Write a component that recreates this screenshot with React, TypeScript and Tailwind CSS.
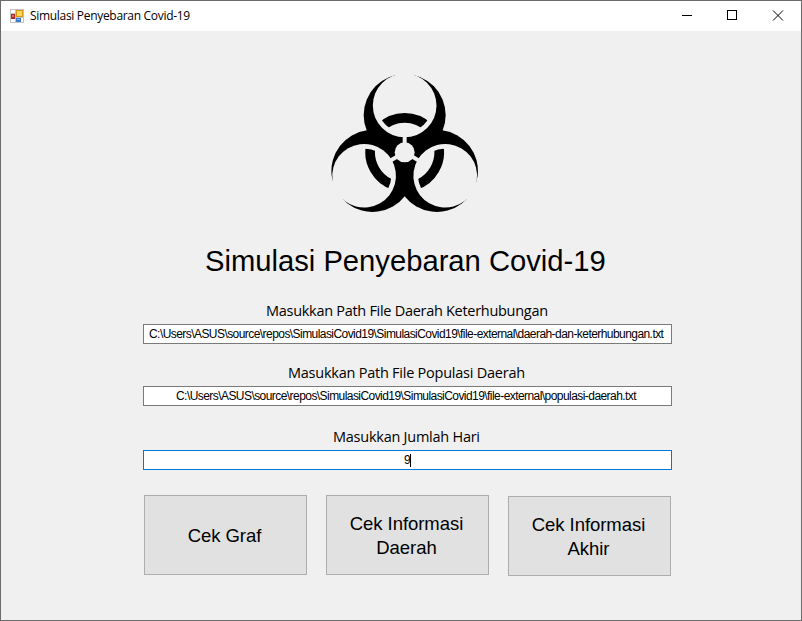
import React from 'react';

const ui = "font-['Open_Sans','Noto_Sans',sans-serif]";
const sans = "font-['Liberation_Sans',Arial,sans-serif]";

function FormIcon() {
  return (
    <svg width="14" height="14" viewBox="0 0 14 14" shapeRendering="crispEdges" className="shrink-0">
      <rect width="14" height="14" fill="#c3c3c3" />
      <rect x="1" y="1" width="4" height="3" fill="#fff" />
      <rect x="1" y="10" width="4" height="3" fill="#fff" />
      <rect x="6" y="9" width="7" height="4" fill="#fff" />
      <rect x="1" y="5" width="4" height="5" fill="#b3261e" />
      <rect x="2" y="6" width="2" height="2" fill="#e0716a" />
      <rect x="6" y="1" width="7" height="7" fill="#d39a12" />
      <rect x="7" y="2" width="5" height="5" fill="#ffd45c" />
      <rect x="6" y="9" width="5" height="4" fill="#3f78cf" />
      <rect x="7" y="10" width="3" height="1" fill="#8fb9f3" />
    </svg>
  );
}

const turns = [0, 120, 240];

function Biohazard() {
  return (
    <svg width="170" height="155" viewBox="0 0 510 465" className="block">
      <defs>
        <mask id="blades" maskUnits="userSpaceOnUse" x="0" y="0" width="510" height="465">
          <rect width="510" height="465" fill="#fff" />
          {turns.map((t) => (
            <g key={t} transform={`rotate(${t} 254 262)`}>
              <circle cx="254" cy="121.5" r="95.5" fill="#000" />
              <rect x="225" y="10" width="58" height="40" fill="#000" />
              <rect x="248" y="200" width="12" height="50" fill="#000" />
            </g>
          ))}
          <circle cx="254" cy="262" r="30" fill="#000" />
        </mask>
        <clipPath id="lobe">
          <circle cx="254" cy="122" r="81" />
        </clipPath>
      </defs>
      <g mask="url(#blades)">
        {turns.map((t) => (
          <circle key={t} cx="254" cy="150.3" r="123" transform={`rotate(${t} 254 262)`} />
        ))}
      </g>
      {turns.map((t) => (
        <g key={t} transform={`rotate(${t} 254 262)`}>
          <g clipPath="url(#lobe)">
            <circle cx="254" cy="262" r="103.5" fill="none" stroke="#000" strokeWidth="29" />
          </g>
        </g>
      ))}
    </svg>
  );
}

export default function App() {
  return (
    <div className="flex h-[621px] w-[802px] flex-col overflow-hidden border border-[#6b6b6b] bg-[#f0f0f0] text-black">
      <header className={`flex h-[30px] shrink-0 items-center bg-white pl-[9px] ${ui}`}>
        <FormIcon />
        <span className="ml-[6px] text-[12px] leading-[16px] tracking-[-0.31px] whitespace-nowrap">Simulasi Penyebaran Covid-19</span>
        <svg width="120" height="30" viewBox="0 0 120 30" className="ml-auto" fill="none" stroke="#000">
          <path d="M1 14.5H11" />
          <rect x="46.5" y="9.5" width="9" height="9" />
          <path d="M92 9.5l10 10M102 9.5l-10 10" />
        </svg>
      </header>

      <main className="flex flex-col pl-[142px]">
        <div className="mt-[34px] ml-[177px]">
          <Biohazard />
        </div>
        <h1 className={`mt-[23px] ml-[62px] text-[29.2px] leading-[36px] whitespace-nowrap ${sans}`}>Simulasi Penyebaran Covid-19</h1>

        <section className="mt-[20px] w-[529px]">
          <label className={`block h-[25px] pl-[123px] text-[14.5px] leading-[23px] tracking-[-0.29px] whitespace-nowrap ${ui}`}>Masukkan Path File Daerah Keterhubungan</label>
          <div className={`h-[20px] border border-[#7a7a7a] bg-white pl-[5px] text-[12px] leading-[19px] tracking-[-0.56px] whitespace-nowrap ${sans}`}>
            C:\Users\ASUS\source\repos\SimulasiCovid19\SimulasiCovid19\file-external\daerah-dan-keterhubungan.txt
          </div>
        </section>

        <section className="mt-[17px] w-[529px]">
          <label className={`block h-[25px] pl-[145px] text-[14.5px] leading-[23px] tracking-[-0.24px] whitespace-nowrap ${ui}`}>Masukkan Path File Populasi Daerah</label>
          <div className={`h-[20px] border border-[#7a7a7a] bg-white pl-[32px] text-[12px] leading-[19px] tracking-[-0.56px] whitespace-nowrap ${sans}`}>
            C:\Users\ASUS\source\repos\SimulasiCovid19\SimulasiCovid19\file-external\populasi-daerah.txt
          </div>
        </section>

        <section className="mt-[19px] w-[529px]">
          <label className={`block h-[25px] pl-[190px] text-[14.5px] leading-[23px] tracking-[-0.25px] whitespace-nowrap ${ui}`}>Masukkan Jumlah Hari</label>
          <div className={`flex h-[20px] items-center border border-[#0078d7] bg-white pl-[260px] text-[12px] leading-[18px] ${sans}`}>
            <span className="w-[6px]">9</span>
            <span className="h-[13px] w-px bg-black" />
          </div>
        </section>

        <div className={`mt-[25px] ml-px flex gap-[19px] text-[18.5px] leading-[24px] tracking-[-0.05px] ${sans}`}>
          <button className="h-[80px] w-[163px] border border-[#adadad] bg-[#e1e1e1] pt-[2px] pr-[2px]">Cek Graf</button>
          <button className="h-[80px] w-[163px] border border-[#adadad] bg-[#e1e1e1] pt-[2px] pr-[2px]">
            Cek Informasi
            <br />
            Daerah
          </button>
          <button className="mt-px h-[80px] w-[163px] border border-[#adadad] bg-[#e1e1e1] pt-[2px] pr-[2px]">
            Cek Informasi
            <br />
            Akhir
          </button>
        </div>
      </main>
    </div>
  );
}
